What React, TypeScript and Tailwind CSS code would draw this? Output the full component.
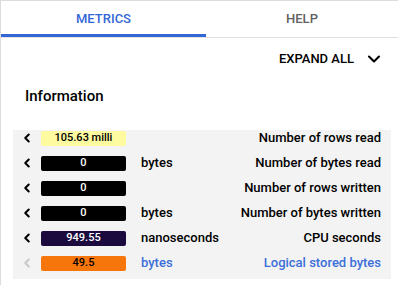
import { ChevronDown, ChevronLeft } from "lucide-react";

type Row = {
  value: string;
  unit: string;
  label: string;
  bar: string;
  text: string;
  disabled?: boolean;
  link?: boolean;
};

const rows: Row[] = [
  { value: "105.63 milli", unit: "", label: "Number of rows read", bar: "bg-[#fdfaa0]", text: "text-black" },
  { value: "0", unit: "bytes", label: "Number of bytes read", bar: "bg-black", text: "text-white" },
  { value: "0", unit: "", label: "Number of rows written", bar: "bg-black", text: "text-white" },
  { value: "0", unit: "bytes", label: "Number of bytes written", bar: "bg-black", text: "text-white" },
  { value: "949.55", unit: "nanoseconds", label: "CPU seconds", bar: "bg-[#1c0a3f]", text: "text-white" },
  { value: "49.5", unit: "bytes", label: "Logical stored bytes", bar: "bg-[#f7760b]", text: "text-black", disabled: true, link: true },
];

export default function App() {
  return (
    <div className="w-[398px] h-[285px] bg-white border-t border-l border-[#dcdcdc] font-['Roboto',sans-serif] overflow-hidden">
      <div className="flex h-[37px] border-b border-[#e0e0e0]">
        <div className="w-[205px] flex items-center justify-center border-b-[3px] border-[#3367d6] pt-[2px] text-[13px] font-medium text-[#3367d6]">
          METRICS
        </div>
        <div className="flex-1 flex items-center justify-center text-[13px] font-medium text-[#616161]">
          HELP
        </div>
      </div>

      <div className="flex justify-end items-center pr-[14px] pt-[2px] h-[40px]">
        <span className="text-[13px] font-medium text-black">EXPAND ALL</span>
        <ChevronDown className="w-[20px] h-[20px] ml-[10px] text-black" strokeWidth={2.5} />
      </div>

      <div className="pl-[24px] pt-[7px] text-[15px] leading-[22px] font-medium text-black">Information</div>

      <div className="ml-[12px] mr-[7px] mt-[23px] bg-[#f3f3f3] pb-[8px] flex flex-col gap-[9px]">
        {rows.map((r) => (
          <div key={r.label} className="flex items-center h-[16px]">
            <ChevronLeft
              className={`w-[14px] h-[14px] ml-[7px] ${r.disabled ? "text-[#c8c8c8]" : "text-black"}`}
              strokeWidth={3.5}
            />
            <div
              className={`ml-[7px] w-[85px] h-[15px] rounded-[2px] flex items-center justify-center text-[11px] font-medium ${r.bar} ${r.text}`}
            >
              {r.value}
            </div>
            <span className={`ml-[15px] text-[13px] font-medium ${r.link ? "text-[#3c6fd9]" : "text-black"}`}>
              {r.unit}
            </span>
            <span
              className={`ml-auto mr-[10px] text-[13px] font-medium ${r.link ? "text-[#3c6fd9]" : "text-black"}`}
            >
              {r.label}
            </span>
          </div>
        ))}
      </div>
    </div>
  );
}
